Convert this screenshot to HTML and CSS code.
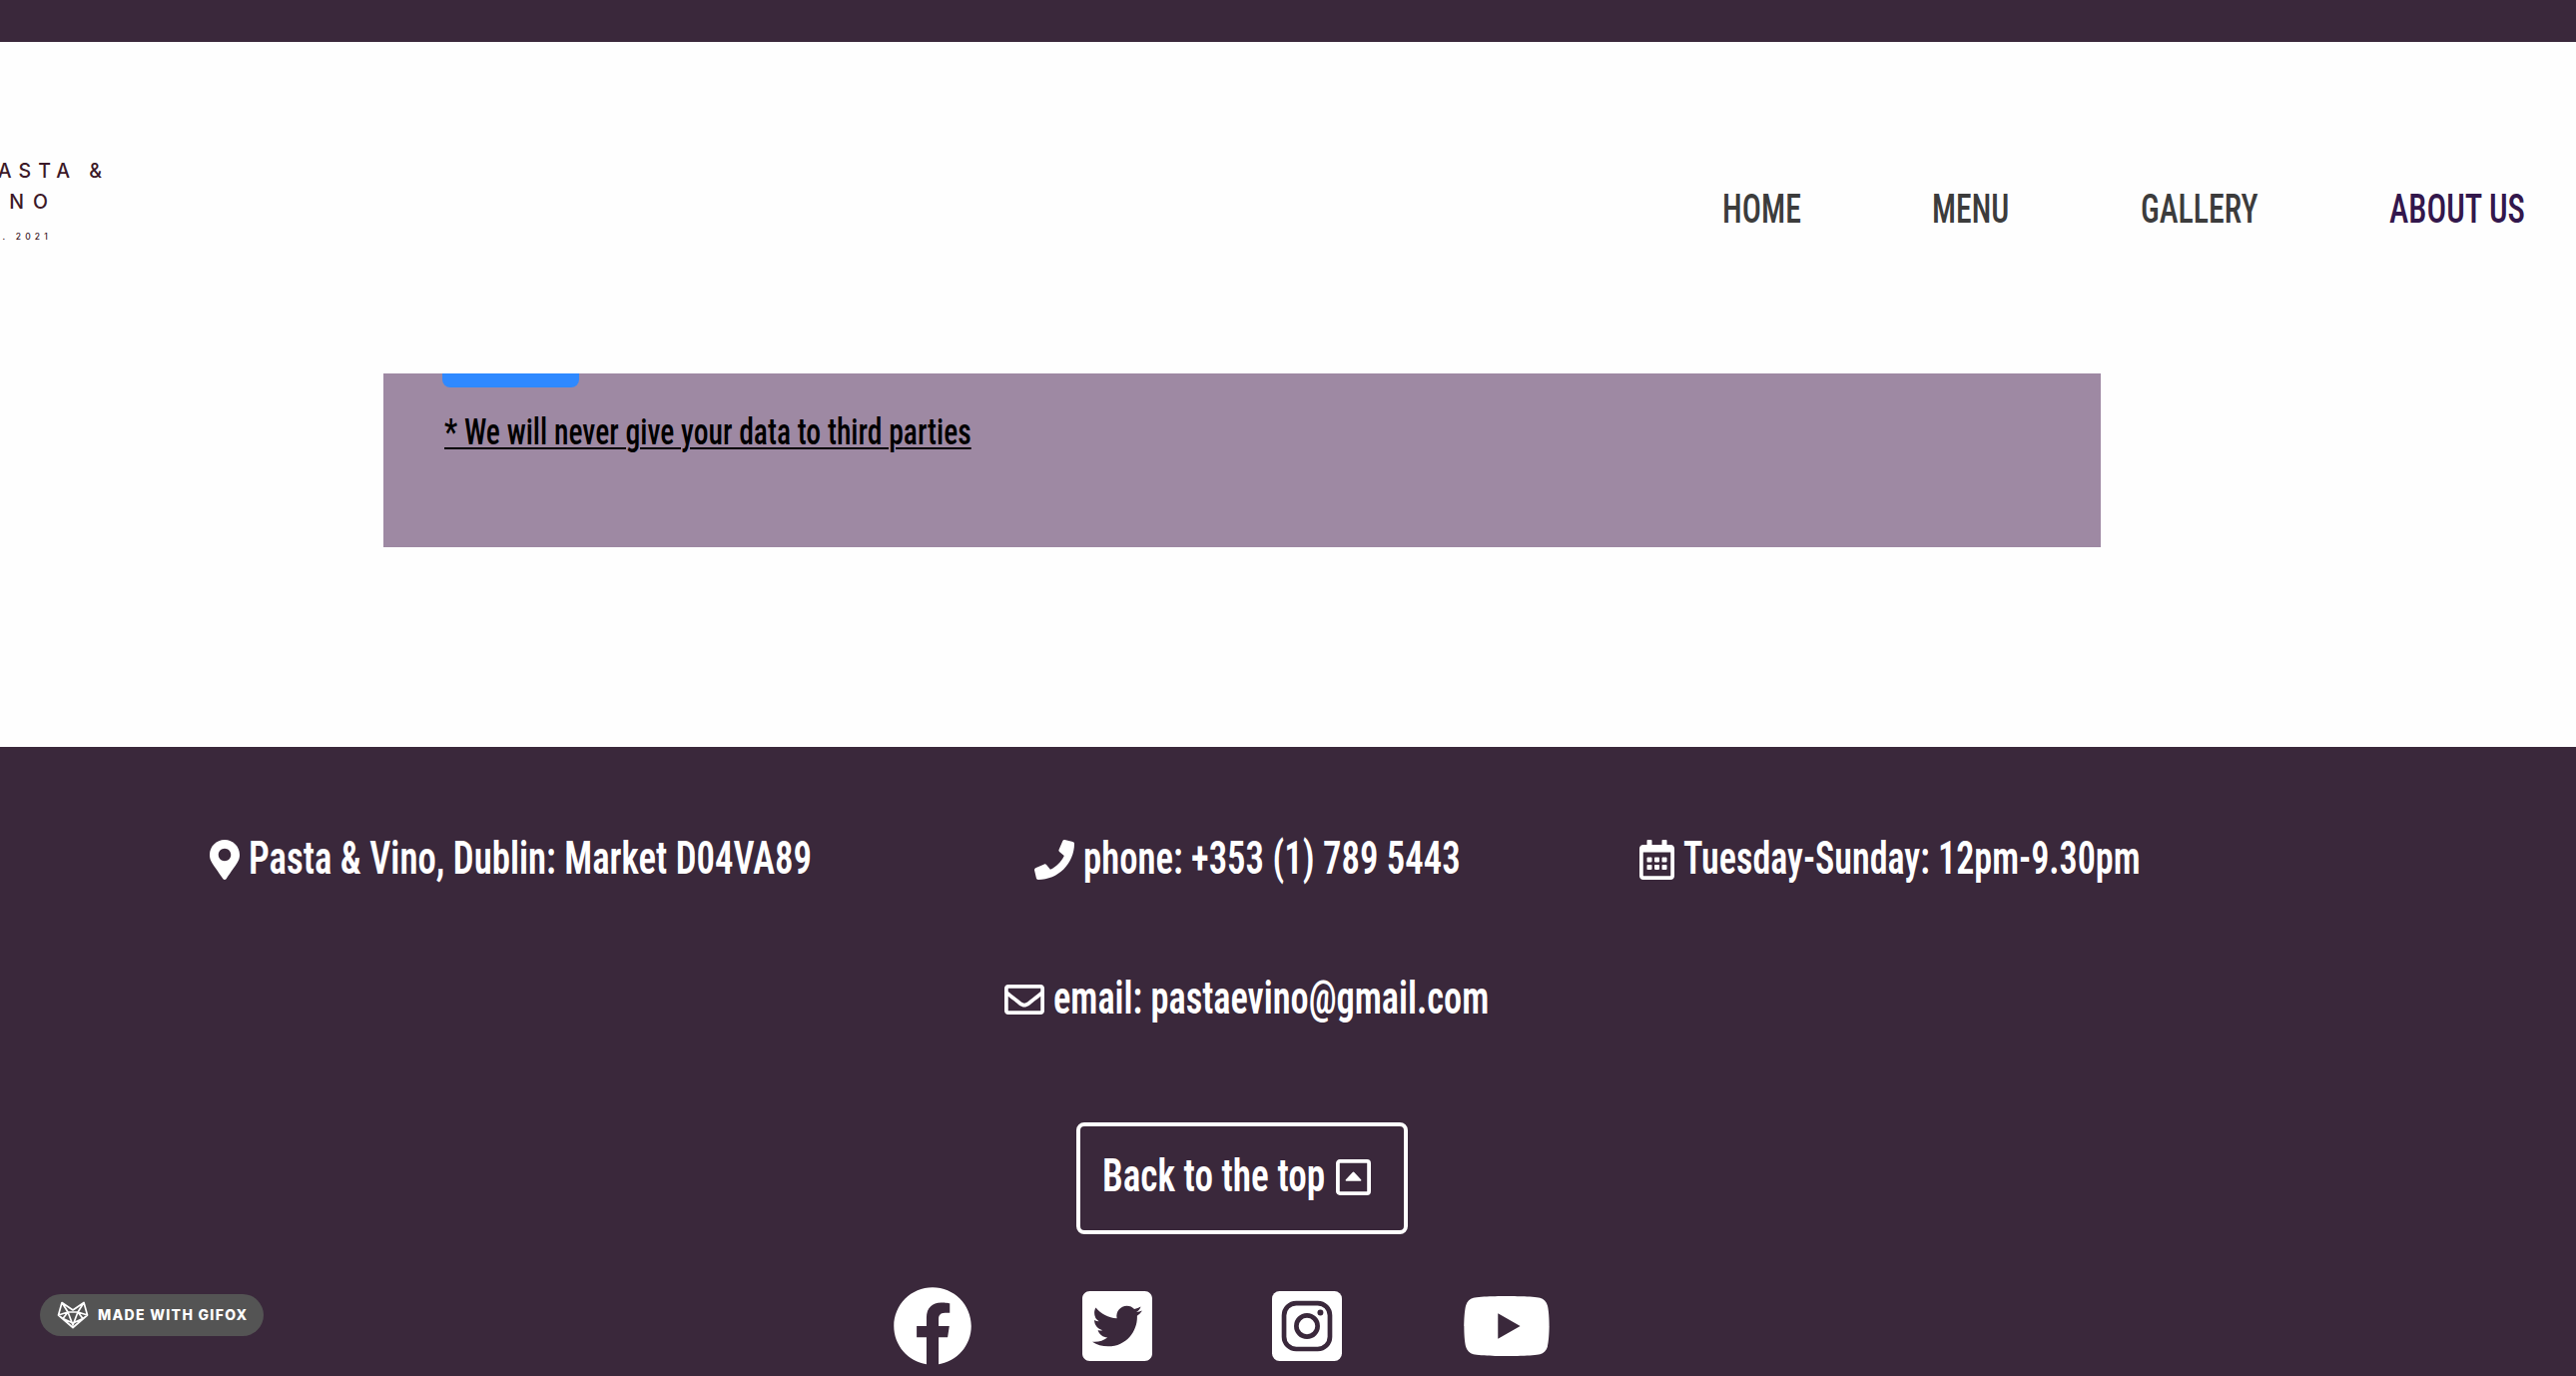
FILE: index.html
```
<!DOCTYPE html>
<html lang="en">
<head>
<meta charset="utf-8">
<title>Pasta &amp; Vino - About us</title>
<link rel="stylesheet" href="styles.css">
</head>
<body>
<div class="top-bar"></div>
<header class="header">
  <div class="logo">
    <div class="logo-line">PASTA &amp;</div>
    <div class="logo-line logo-second">VINO</div>
    <div class="logo-year">EST. 2021</div>
  </div>
  <nav class="nav">
    <a class="nav-home"><span class="narrow">HOME</span></a>
    <a class="nav-menu"><span class="narrow">MENU</span></a>
    <a class="nav-gallery"><span class="narrow">GALLERY</span></a>
    <a class="nav-about active"><span class="narrow">ABOUT US</span></a>
  </nav>
</header>
<main class="main">
  <section class="panel">
    <div class="submit"></div>
    <p class="note narrow">* We will never give your data to third parties</p>
  </section>
</main>
<footer class="footer">
  <div class="row contacts">
    <div class="contact address">
      <svg width="30" height="40" viewBox="0 0 384 512"><path d="M172.268 501.67C26.97 291.031 0 269.413 0 192 0 85.961 85.961 0 192 0s192 85.961 192 192c0 77.413-26.97 99.031-172.268 309.67-9.535 13.774-29.93 13.773-39.464 0zM192 272c44.183 0 80-35.817 80-80s-35.817-80-80-80-80 35.817-80 80 35.817 80 80 80z"/></svg>
      <span class="narrow">Pasta &amp; Vino, Dublin: Market D04VA89</span>
    </div>
    <div class="contact phone">
      <svg width="40" height="40" viewBox="0 0 512 512"><path d="M493.4 24.6l-104-24c-11.3-2.6-22.9 3.3-27.5 13.9l-48 112c-4.2 9.8-1.4 21.3 6.9 28l60.6 49.6c-36 76.7-98.9 140.5-177.2 177.2l-49.6-60.6c-6.8-8.3-18.2-11.1-28-6.9l-112 48C3.9 366.5-2 378.1.6 389.4l24 104C27.1 504.2 36.7 512 48 512c256.1 0 464-207.5 464-464 0-11.2-7.7-20.9-18.6-23.4z"/></svg>
      <span class="narrow">phone: +353 (1) 789 5443</span>
    </div>
    <div class="contact hours">
      <svg width="35" height="40" viewBox="0 0 448 512"><path d="M148 288h-40c-6.600 0-12-5.400-12-12v-40c0-6.600 5.400-12 12-12h40c6.600 0 12 5.400 12 12v40c0 6.600-5.400 12-12 12zm108-12v-40c0-6.600-5.400-12-12-12h-40c-6.600 0-12 5.400-12 12v40c0 6.600 5.400 12 12 12h40c6.600 0 12-5.400 12-12zm96 0v-40c0-6.600-5.400-12-12-12h-40c-6.600 0-12 5.400-12 12v40c0 6.600 5.400 12 12 12h40c6.600 0 12-5.400 12-12zm-96 96v-40c0-6.600-5.400-12-12-12h-40c-6.600 0-12 5.400-12 12v40c0 6.600 5.400 12 12 12h40c6.600 0 12-5.400 12-12zm-96 0v-40c0-6.600-5.400-12-12-12h-40c-6.600 0-12 5.400-12 12v40c0 6.600 5.400 12 12 12h40c6.600 0 12-5.400 12-12zm192 0v-40c0-6.600-5.400-12-12-12h-40c-6.600 0-12 5.400-12 12v40c0 6.600 5.400 12 12 12h40c6.600 0 12-5.400 12-12zm96-260v352c0 26.500-21.500 48-48 48H48c-26.500 0-48-21.500-48-48V112c0-26.500 21.500-48 48-48h48V12c0-6.600 5.400-12 12-12h40c6.600 0 12 5.400 12 12v52h128V12c0-6.600 5.400-12 12-12h40c6.600 0 12 5.400 12 12v52h48c26.500 0 48 21.500 48 48zm-48 346V160H48v298c0 3.300 2.700 6 6 6h340c3.300 0 6-2.700 6-6z"/></svg>
      <span class="narrow">Tuesday-Sunday: 12pm-9.30pm</span>
    </div>
  </div>
  <div class="row mail">
    <div class="contact email">
      <svg width="40" height="40" viewBox="0 0 512 512"><path d="M464 64H48C21.49 64 0 85.49 0 112v288c0 26.51 21.49 48 48 48h416c26.51 0 48-21.49 48-48V112c0-26.51-21.49-48-48-48zm0 48v40.805c-22.422 18.259-58.168 46.651-134.587 106.49-16.841 13.247-50.201 45.072-73.413 44.701-23.208.375-56.579-31.459-73.413-44.701C106.18 199.465 70.425 171.067 48 152.805V112h416zM48 400V214.398c22.914 18.251 55.409 43.862 104.938 82.646 21.857 17.205 60.134 55.186 103.062 54.955 42.717.231 80.509-37.199 103.053-54.947 49.528-38.783 82.032-64.401 104.947-82.653V400H48z"/></svg>
      <span class="narrow">email: pastaevino@gmail.com</span>
    </div>
  </div>
  <a class="to-top">
    <span class="narrow">Back to the top</span>
    <svg width="35" height="36" viewBox="0 0 35 36"><rect x="1.900" y="1.900" width="31.200" height="32.200" rx="2" fill="none" stroke="currentColor" stroke-width="3.800"/><path d="M9.700 20.500L16.700 13q.8-.8 1.600 0l7 7.500q.6 1-.6 1.200h-14.400q-1.200-.2-.6-1.200z"/></svg>
  </a>
  <div class="social">
    <svg class="facebook" width="80" height="80" viewBox="0 0 512 512"><path d="M504 256C504 119 393 8 256 8S8 119 8 256c0 123.78 90.69 226.38 209.25 245V327.69h-63V256h63v-54.64c0-62.15 37-96.48 93.67-96.48 27.14 0 55.52 4.84 55.52 4.84v61h-31.28c-30.8 0-40.41 19.12-40.41 38.73V256h68.78l-11 71.69h-57.78V501C413.31 482.38 504 379.78 504 256z"/></svg>
    <svg class="twitter" width="70" height="80" viewBox="0 0 448 512"><path d="M400 32H48C21.5 32 0 53.5 0 80v352c0 26.5 21.5 48 48 48h352c26.5 0 48-21.5 48-48V80c0-26.5-21.500-48-48-48zm-48.900 158.800c.2 2.800.2 5.700.2 8.500 0 86.700-66 186.600-186.600 186.600-37.200 0-71.700-10.800-100.700-29.400 5.300.6 10.400.8 15.800.8 30.700 0 58.900-10.400 81.400-28-28.800-.6-53-19.500-61.300-45.500 10.100 1.500 19.200 1.500 29.600-1.200-30-6.100-52.500-32.500-52.500-64.400v-.8c8.700 4.900 18.900 7.900 29.600 8.300a65.447 65.447 0 0 1-29.200-54.600c0-12.200 3.200-23.400 8.900-33.100 32.300 39.800 80.800 65.800 135.200 68.600-9.300-44.500 24-80.600 64-80.600 18.900 0 35.900 7.900 47.900 20.700 14.800-2.800 29-8.300 41.600-15.800-4.900 15.200-15.200 28-28.800 36.100 13.200-1.400 26-5.100 37.800-10.200-8.900 13.100-20.100 24.700-32.900 34z"/></svg>
    <svg class="instagram" width="70" height="80" viewBox="0 0 448 512"><rect y="32" width="448" height="448" rx="48"/><g class="cutout"><rect x="77" y="109" width="294" height="294" rx="78"/><circle cx="224" cy="256" r="68"/><circle class="dot" cx="310" cy="170" r="19"/></g></svg>
    <svg class="youtube" width="90" height="80" viewBox="0 0 576 512"><path d="M549.655 124.083c-6.281-23.65-24.787-42.276-48.284-48.597C458.781 64 288 64 288 64S117.22 64 74.629 75.486c-23.497 6.322-42.003 24.947-48.284 48.597-11.412 42.867-11.412 132.305-11.412 132.305s0 89.438 11.412 132.305c6.281 23.65 24.787 41.5 48.284 47.821C117.22 448 288 448 288 448s170.78 0 213.371-11.486c23.497-6.321 42.003-24.171 48.284-47.821 11.412-42.867 11.412-132.305 11.412-132.305s0-89.438-11.412-132.305zm-317.51 213.508V175.185l142.739 81.205-142.739 81.201z"/></svg>
  </div>
</footer>
<div class="badge">
  <svg width="32" height="28" viewBox="0 0 32 28"><path d="M5 1.500L16 9 27 1.500 30.500 14 16 26.500 1.500 14zM5 1.500L11 11h10l6-9.500M1.500 14l9.500-3 5 13 5-13 9.500 3M11 11l-5 6.500L16 22l10-4.500L21 11"/></svg>
  <span>MADE WITH GIFOX</span>
</div>
</body>
</html>
```
FILE: styles.css
```
* { box-sizing: border-box; }
body {
  margin: 0;
  height: 1378px;
  overflow: hidden;
  background: #fefefe;
  font-family: Roboto, "Liberation Sans", sans-serif;
  font-stretch: 75%;
  display: flex;
  flex-direction: column;
}
svg { display: block; flex: none; fill: currentColor; }

/* Roboto Condensed squeezed further into a tall, narrow face */
.narrow {
  display: block;
  white-space: nowrap;
  transform-origin: 0 50%;
  transform: scaleX(var(--squeeze, .77));
}

.top-bar { height: 42px; background: #3a283b; flex: none; }
.header {
  height: 332px;
  flex: none;
  display: flex;
  justify-content: space-between;
  align-items: flex-start;
}
.logo {
  width: 201px;
  margin-left: -92px;
  padding-top: 114px;
  font-family: Inter, sans-serif;
  font-weight: 550;
  font-stretch: 100%;
  color: #3c1928;
  text-align: right;
}
.logo-line {
  height: 31px;
  line-height: 31px;
  font-size: 19.5px;
  letter-spacing: 7px;
}
.logo-second { letter-spacing: 9px; padding-right: 52px; }
.logo-year {
  font-size: 8.5px;
  line-height: 12px;
  padding: 13px 57px 0 0;
  letter-spacing: 4.2px;
}
.nav {
  display: flex;
  padding: 142px 52px 0 0;
  font-size: 41.5px;
  font-weight: 460;
  line-height: 50px;
  color: #3c3c3c;
}
.nav-home { width: 210px; }
.nav-menu { width: 209px; --squeeze: .765; }
.nav-gallery { width: 249px; }
.nav-about { width: 135px; --squeeze: .79; }
.active { color: #33174c; }

.main { height: 374px; flex: none; padding-left: 384px; }
.panel {
  width: 1720px;
  height: 174px;
  padding-left: 59px;
  background: #9e89a3;
}
.submit {
  width: 137px;
  height: 14px;
  border-radius: 0 0 8px 8px;
  background: #2f89ff;
}
.note {
  width: 640px;
  margin: 25px 0 0 2px;
  font-size: 36px;
  font-weight: 520;
  line-height: 40px;
  color: #000;
  text-decoration: underline;
  text-decoration-thickness: 2px;
  text-underline-offset: 3px;
  --squeeze: .823;
}

.footer {
  height: 630px;
  flex: none;
  padding-top: 93px;
  background: #3a283b;
  color: #fff;
  font-size: 46.5px;
  font-weight: 560;
}
.row { display: flex; height: 40px; }
.contact { display: flex; align-items: center; line-height: 42px; }
.contact .narrow { margin-top: -4px; }
.contacts { padding-left: 210px; }
.address { width: 826px; gap: 9px; --squeeze: .791; }
.phone { width: 606px; gap: 9px; --squeeze: .789; }
.hours { gap: 9px; --squeeze: .776; }
.mail { margin-top: 100px; padding-left: 1006px; }
.email { gap: 9px; --squeeze: .782; }
.to-top {
  display: flex;
  align-items: center;
  justify-content: space-between;
  width: 332px;
  height: 112px;
  margin: 103px 0 0 1078px;
  padding: 0 33px 3px 22px;
  border: 4px solid #fff;
  border-radius: 8px;
  --squeeze: .8;
}
.to-top .narrow { width: 228px; margin-top: -3px; }
.social { display: flex; padding-left: 894px; margin-top: 52px; }
.twitter { margin-left: 110px; }
.instagram { margin-left: 120px; }
.youtube { margin-left: 120px; }
.cutout { fill: none; stroke: #3a283b; stroke-width: 30; }
.dot { fill: #3a283b; stroke: none; }

/* Recorder watermark, floats over the page */
.badge {
  position: absolute;
  left: 40px;
  top: 1296px;
  width: 224px;
  height: 42px;
  display: flex;
  align-items: center;
  gap: 9px;
  padding: 0 0 0 17px;
  border-radius: 21px;
  background: #545454;
  color: #fff;
  font: 800 14px/42px Inter, sans-serif;
  letter-spacing: 1.3px;
  white-space: nowrap;
}
.badge svg { fill: none; stroke: #fff; stroke-width: 1.700; stroke-linejoin: round; }
```
